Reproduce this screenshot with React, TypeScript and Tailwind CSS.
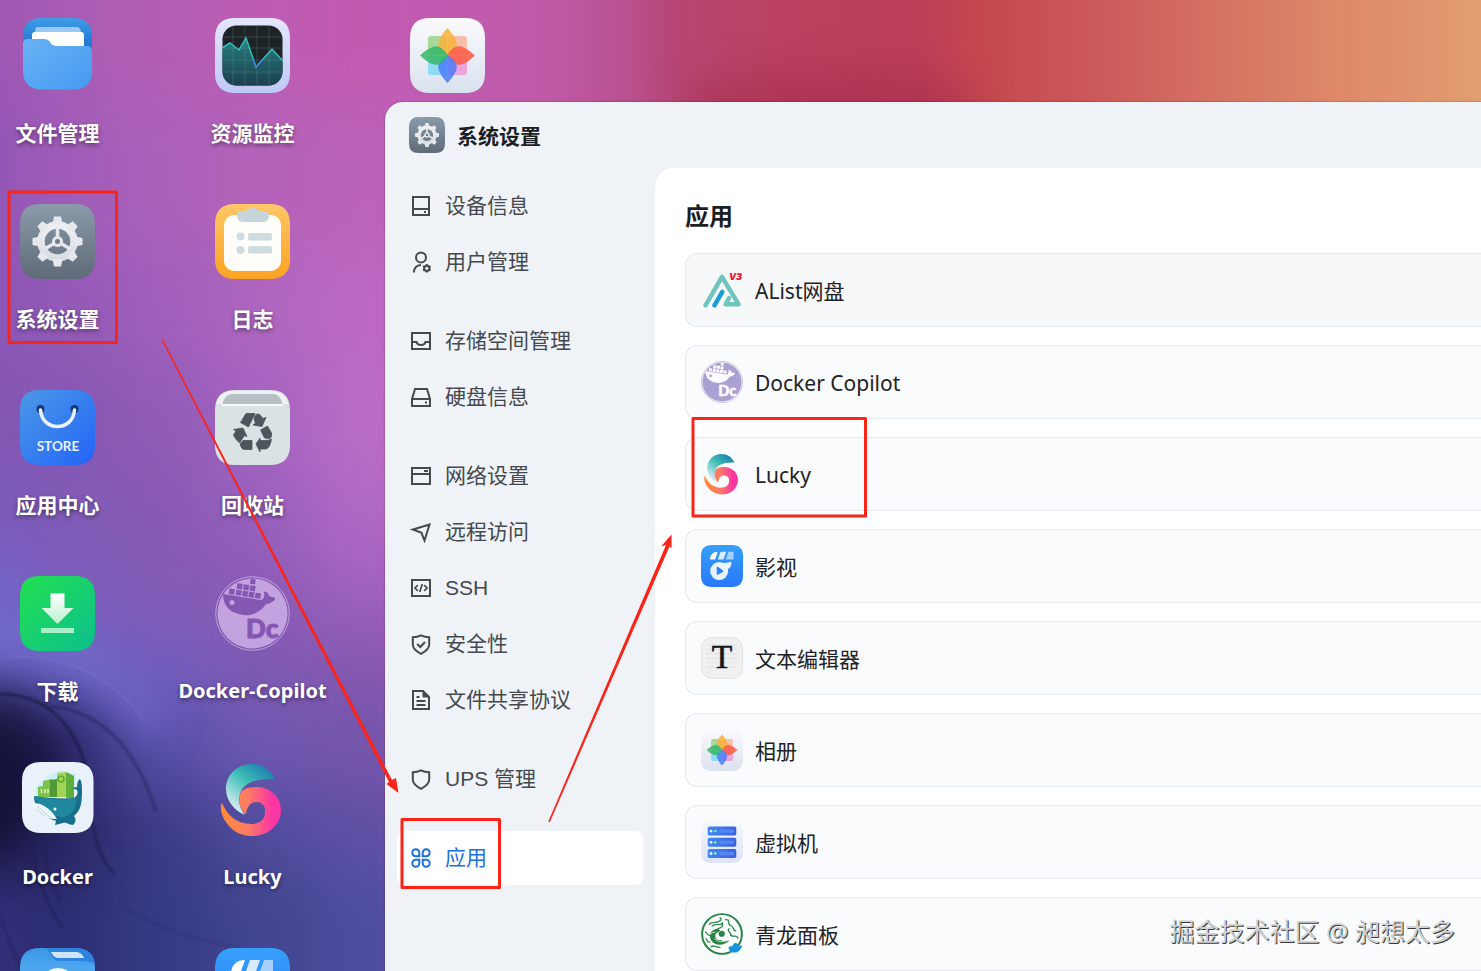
import type { ReactNode } from 'react'

/* ---------- wallpaper ---------- */

// coarse colour mesh, blurred into a smooth wallpaper
const meshX = [-60, 60, 150, 250, 350]
const meshRows = [
  { y: -100, h: 200, colors: ['#9a55b3', '#a85cb4', '#b35eb5', '#be5cb4', '#c35ab0'] },
  { y: 100, h: 150, colors: ['#9055b6', '#9e5cb8', '#ab61ba', '#b362b9', '#bc62ba'] },
  { y: 250, h: 120, colors: ['#8a56b8', '#9259b7', '#9f5fba', '#ae66bf', '#bb69c3'] },
  { y: 370, h: 110, colors: ['#8156b4', '#8558b2', '#905bb7', '#a463c0', '#b96cc5'] },
  { y: 480, h: 90, colors: ['#775cbd', '#7f5bb7', '#865ab5', '#965fbc', '#ae68c3'] },
  { y: 570, h: 70, colors: ['#7069d2', '#7a60c0', '#815cb7', '#875ab5', '#9a60bb'] },
  { y: 640, h: 60, colors: ['#5a58b4', '#6663c2', '#735fc0', '#7e5ab2', '#8457b0'] },
  { y: 700, h: 90, colors: ['#16133a', '#2e2a70', '#5650a8', '#6e58b0', '#7555ac'] },
  { y: 790, h: 80, colors: ['#191641', '#282560', '#3b3a86', '#504c9e', '#5f50a4'] },
  { y: 870, h: 200, colors: ['#33307a', '#2c2d72', '#363b85', '#42458f', '#4d4d9f'] },
]

function Wallpaper() {
  return (
    <svg
      className="absolute inset-0 h-full w-full"
      viewBox="0 0 1481 971"
      preserveAspectRatio="xMinYMin slice"
      colorInterpolationFilters="sRGB"
      aria-hidden="true"
    >
      <defs>
        <linearGradient id="wpTop" x1="0" x2="1481" y1="0" y2="0" gradientUnits="userSpaceOnUse">
          <stop offset="0.26" stopColor="#c05cb6" />
          <stop offset="0.365" stopColor="#c05aa8" />
          <stop offset="0.415" stopColor="#ba5296" />
          <stop offset="0.46" stopColor="#b54571" />
          <stop offset="0.52" stopColor="#ba4161" />
          <stop offset="0.62" stopColor="#bb3e58" />
          <stop offset="0.66" stopColor="#c4474f" />
          <stop offset="0.74" stopColor="#cb595b" />
          <stop offset="0.83" stopColor="#d67564" />
          <stop offset="0.91" stopColor="#de8a68" />
          <stop offset="1" stopColor="#e29d72" />
        </linearGradient>
        <linearGradient id="wpFade" x1="0" x2="1" y1="0" y2="0">
          <stop offset="0" stopColor="#fff" />
          <stop offset="0.8" stopColor="#fff" />
          <stop offset="1" stopColor="#000" />
        </linearGradient>
        <mask id="wpMask">
          <rect width="470" height="971" fill="url(#wpFade)" />
        </mask>
        <filter id="wpBlur" x="-20%" y="-20%" width="140%" height="140%">
          <feGaussianBlur stdDeviation="32" />
        </filter>
        <filter id="wpSoft" x="-60%" y="-80%" width="220%" height="260%">
          <feGaussianBlur stdDeviation="18" />
        </filter>
        <filter id="wpLine">
          <feGaussianBlur stdDeviation="1" />
        </filter>
      </defs>
      <rect width="1481" height="971" fill="url(#wpTop)" />
      <ellipse cx="830" cy="105" rx="150" ry="35" fill="#a32c4c" fillOpacity="0.5" filter="url(#wpSoft)" />
      <g mask="url(#wpMask)">
        <g filter="url(#wpBlur)">
          {meshRows.map((row) =>
            row.colors.map((color, i) => (
              <rect key={`${row.y}-${i}`} x={meshX[i] - 40} y={row.y} width={i === 4 ? 260 : 160} height={row.h + 2} fill={color} />
            ))
          )}
        </g>
        <path d="M-40 640C40 628 110 662 160 730" stroke="#7f78dc" strokeWidth="26" strokeOpacity="0.6" fill="none" filter="url(#wpSoft)" />
        <path d="M-30 700C20 680 60 720 70 765C60 800 20 850 -30 870Z" fill="#0b0928" fillOpacity="0.5" filter="url(#wpSoft)" />
        <g fill="none" filter="url(#wpLine)">
          <path d="M0 658C50 650 110 670 145 722" stroke="#8c86e6" strokeOpacity="0.25" strokeWidth="2" />
          <path d="M0 694C50 694 76 730 86 768" stroke="#07051c" strokeOpacity="0.4" strokeWidth="3" />
          <path d="M50 706C110 712 140 760 156 812" stroke="#141038" strokeOpacity="0.35" strokeWidth="3" />
          <path d="M92 820C96 845 102 860 114 874" stroke="#100d30" strokeOpacity="0.5" strokeWidth="2" />
          <path d="M33 850C36 880 48 905 62 928" stroke="#15123c" strokeOpacity="0.4" strokeWidth="2" />
          <path d="M45 850C48 880 54 890 60 900" stroke="#15123c" strokeOpacity="0.3" strokeWidth="2" />
          <path d="M0 915C8 940 15 955 22 971" stroke="#15123c" strokeOpacity="0.3" strokeWidth="2" />
          <path d="M120 905C160 930 200 942 240 948" stroke="#252860" strokeOpacity="0.2" strokeWidth="3" />
        </g>
      </g>
    </svg>
  )
}

/* ---------- app icons, all on a 75x75 box ---------- */

const squircle = 'M20 0H55Q75 0 75 20V55Q75 75 55 75H20Q0 75 0 55V20Q0 0 20 0Z'

function Glyph({ children, className = 'size-[75px]' }: { children: ReactNode; className?: string }) {
  return (
    <svg className={`${className} shrink-0`} viewBox="0 0 75 75" aria-hidden="true">
      {children}
    </svg>
  )
}

function FolderIcon() {
  return (
    <Glyph>
      <defs>
        <linearGradient id="fBack" x1="0" x2="0" y1="0" y2="1">
          <stop offset="0" stopColor="#3f9de8" />
          <stop offset="0.5" stopColor="#2478d0" />
        </linearGradient>
        <linearGradient id="fFront" x1="0" x2="1" y1="0" y2="1">
          <stop offset="0" stopColor="#68b2f4" />
          <stop offset="1" stopColor="#459bf2" />
        </linearGradient>
      </defs>
      <path d="M22 0H53Q72 0 72 19V52H3V19Q3 0 22 0Z" fill="url(#fBack)" />
      <path d="M18 9H57Q60 9 61 14H15Q15 9 18 9Z" fill="#9cc9f3" />
      <rect x="12" y="14" width="52" height="24" rx="3" fill="#fff" />
      <path d="M3 25Q3 21 8 21H24Q28 21 30 24Q32 28 37 28H66Q72 28 72 33V52Q72 71.5 53 71.5H22Q3 71.5 3 52Z" fill="url(#fFront)" />
    </Glyph>
  )
}

function MonitorIcon() {
  return (
    <Glyph>
      <defs>
        <linearGradient id="mFrame" x1="0" x2="0" y1="0" y2="1">
          <stop offset="0" stopColor="#e4e6fb" />
          <stop offset="1" stopColor="#bfc8f5" />
        </linearGradient>
        <linearGradient id="mArea" x1="0" x2="0" y1="0" y2="1">
          <stop offset="0" stopColor="#257f7e" />
          <stop offset="1" stopColor="#1c3f50" />
        </linearGradient>
        <clipPath id="mClip">
          <rect x="7.5" y="7.5" width="60" height="60" rx="14" />
        </clipPath>
      </defs>
      <path d={squircle} fill="url(#mFrame)" />
      <g clipPath="url(#mClip)">
        <rect x="7" y="7" width="61" height="61" fill="#1e2426" />
        <path d="M7 30L15 25L24 32L31 20L41 49L57 31L68 43V68H7Z" fill="url(#mArea)" />
        <path d="M18 7V68M30 7V68M42 7V68M54 7V68M7 19H68M7 30H68M7 42H68M7 54H68" stroke="#8aa39a" strokeOpacity="0.25" />
        <path d="M7 30L15 25L24 32L31 20L41 49L57 31L68 43" fill="none" stroke="#2fc0bd" strokeWidth="1.5" />
        <path d="M38 41L41 49L48 41" fill="none" stroke="#3a80e8" strokeWidth="1.5" />
      </g>
    </Glyph>
  )
}

const teeth = [0, 45, 90, 135, 180, 225, 270, 315]

function SettingsIcon({ className }: { className?: string }) {
  return (
    <Glyph className={className}>
      <defs>
        <linearGradient id="sBg" x1="0" x2="0" y1="0" y2="1">
          <stop offset="0" stopColor="#8b9baa" />
          <stop offset="1" stopColor="#5f6a78" />
        </linearGradient>
        <linearGradient id="sGear" x1="0" x2="0" y1="12" y2="63" gradientUnits="userSpaceOnUse">
          <stop offset="0" stopColor="#f4f5f8" />
          <stop offset="1" stopColor="#d3d7de" />
        </linearGradient>
      </defs>
      <path d={squircle} fill="url(#sBg)" />
      <circle cx="37.5" cy="37.5" r="16.5" fill="none" stroke="url(#sGear)" strokeWidth="7.5" />
      {teeth.map((angle) => (
        <path key={angle} d="M34 12.5H41L42.5 20H32.5Z" fill="#e6e8ed" transform={`rotate(${angle} 37.5 37.5)`} />
      ))}
      {[0, 120, 240].map((angle) => (
        <path key={angle} d="M37.5 34V23" stroke="#e6e8ed" strokeWidth="3.5" transform={`rotate(${angle} 37.5 37.5)`} />
      ))}
      <circle cx="37.5" cy="37.5" r="4" fill="#6f7b89" stroke="#e6e8ed" strokeWidth="3" />
    </Glyph>
  )
}

function LogIcon() {
  return (
    <Glyph>
      <defs>
        <linearGradient id="lBg" x1="0" x2="0" y1="0" y2="1">
          <stop offset="0" stopColor="#fdc767" />
          <stop offset="1" stopColor="#fba321" />
        </linearGradient>
      </defs>
      <path d={squircle} fill="url(#lBg)" />
      <rect x="9" y="11" width="57" height="56" rx="10" fill="#fffdf9" />
      <path d="M27 7H31Q33 4 38 4T45 7H49Q54 7 54 11Q54 18 48 18H28Q22 18 22 11Q22 7 27 7Z" fill="#c6d5dc" />
      <circle cx="25.5" cy="32.5" r="4" fill="#cfdce2" />
      <circle cx="25.5" cy="46" r="4" fill="#cfdce2" />
      <rect x="33" y="29" width="24" height="7.5" rx="2" fill="#cfdce2" />
      <rect x="33" y="42" width="24" height="7.5" rx="2" fill="#cfdce2" />
    </Glyph>
  )
}

function StoreIcon() {
  return (
    <Glyph>
      <defs>
        <linearGradient id="stBg" x1="0" x2="1" y1="0" y2="1">
          <stop offset="0" stopColor="#4b9ae8" />
          <stop offset="1" stopColor="#2363f6" />
        </linearGradient>
      </defs>
      <path d={squircle} fill="url(#stBg)" />
      <circle cx="20.5" cy="19" r="4" fill="#173a78" />
      <circle cx="54.5" cy="19" r="4" fill="#173a78" />
      <path d="M20.5 20C22 42 53 42 54.5 20" fill="none" stroke="#eaf4ff" strokeWidth="3.5" strokeLinecap="round" />
      <text x="38" y="61" textAnchor="middle" fontFamily="Lato, sans-serif" fontWeight="700" fontSize="13.5" fill="#e8f2ff">
        STORE
      </text>
    </Glyph>
  )
}

function TrashIcon() {
  return (
    <Glyph>
      <path d={squircle} fill="#d9e3e4" />
      <path d="M20 1H55Q70 1 73.5 14H1.5Q5 1 20 1Z" fill="#eef2f4" />
      <path d="M17 4H58Q65 4 67.5 14H7.5Q10 4 17 4Z" fill="#b7bfc2" />
      <path d="M7 15H68" stroke="#f6f9fa" strokeWidth="2" />
      <g fill="#4c565b" stroke="#4c565b" strokeWidth="0.8" strokeLinejoin="round">
        <path d="M31 23.5H40L33.500 37L25.500 32.500Z" />
        <path d="M41 24.500Q45 22.500 47.500 28.500L51 27.500L47 36.500L38 35L40.500 33Q37.500 28 41 24.500Z" />
        <path d="M45.500 40L52.500 36L56.500 43Q57.500 46 55 48.500L49.500 48Z" />
        <path d="M41 54L45 48V50.500H50Q54 50.500 56.500 49Q55 58 51 59H45V62Z" />
        <path d="M25 54L28 50.500H37V59.500H28.500Q26.500 59 25 54Z" />
        <path d="M18.500 39.500L28 38L32 46.500L29.500 45.500L24.500 53Q20 49 18.500 45L21 41Z" />
      </g>
    </Glyph>
  )
}

function DownloadIcon() {
  return (
    <Glyph>
      <defs>
        <linearGradient id="dBg" x1="0" x2="1" y1="0" y2="1">
          <stop offset="0" stopColor="#22e04f" />
          <stop offset="1" stopColor="#0cbf8e" />
        </linearGradient>
        <linearGradient id="dArrow" x1="0" x2="0" y1="0" y2="1">
          <stop offset="0" stopColor="#fff" />
          <stop offset="1" stopColor="#b9f2cf" />
        </linearGradient>
      </defs>
      <path d={squircle} fill="url(#dBg)" />
      <path d="M30.5 17.5H44.5V32H53.5L37.5 48L21.5 32H30.5Z" fill="url(#dArrow)" />
      <rect x="21" y="52" width="33" height="5" fill="#a9efc9" />
    </Glyph>
  )
}

function CopilotIcon({ disc, ink, className }: { disc: string; ink: string; className?: string }) {
  return (
    <Glyph className={className}>
      <circle cx="37.5" cy="37.5" r="35" fill={disc} />
      <circle cx="37.5" cy="37.5" r="36.8" fill="none" stroke={disc} />
      <g fill={ink}>
        <g transform="rotate(9 30 20)">
          <path d="M33 2H38V7H33Z" />
          <path d="M20.5 8.5H26V14H20.5ZM27 8.5H32.5V14H27ZM33.500 8.5H39V14H33.500Z" />
          <path d="M13.500 15H19V20.500H13.500ZM20.500 15H26V20.500H20.500ZM27 15H32.500V20.500H27ZM33.500 15H39V20.500H33.500ZM40 15H45.500V20.500H40Z" />
        </g>
        <path d="M8 18L45 24C48 24 50 22 49 16C50 14 54 18 55 21C58 20 61 22 60 24C57 26 54 28 51 28C46 36 37 40 28 39C15 37 8 30 8 18Z" />
        <text x="31" y="62" fontFamily="Lato, sans-serif" fontWeight="900" fontSize="26" stroke={ink} strokeWidth="1">
          Dc
        </text>
      </g>
      <circle cx="17" cy="26.500" r="2.500" fill={disc} />
    </Glyph>
  )
}

function DockerIcon() {
  return (
    <Glyph>
      <path d="M21 0H54Q73.500 0 73.500 19V52Q73.500 71 54 71H21Q2 71 2 52V19Q2 0 21 0Z" fill="#e9f2fa" />
      <path d="M16 25L30 12L40 8L56 12L54 35H16Z" fill="#c9f0f5" />
      <path d="M23 19L32 17V35H18V25L23 24Z" fill="#7fc04a" />
      <path d="M30 18L37 17V35H30Z" fill="#4f9a32" />
      <path d="M37 11L46 10V35H37Z" fill="#9fd455" />
      <path d="M46 10L54 14V36H46Z" fill="#5fae39" />
      <circle cx="41" cy="17" r="3" fill="none" stroke="#4f9a32" strokeWidth="1.200" />
      <path d="M21 27L22 31M25 27V31M28 27V31" stroke="#effad8" strokeWidth="1.300" />
      <path d="M14 34C28 36 42 37 54 36C58 33 58 31 57 28L52 26L57 25C57 21 58 18 60 17C62 20 62 25 62 30C62 43 60 49 54 54C57 58 55 61 53 63C48 63 47 60 43 61L35 63L36 59C23 55 14 46 14 34Z" fill="#176f8c" />
      <path d="M14 34C30 37 44 39 56 36C57 45 52 53 42 56C30 52 20 46 14 34Z" fill="#2087a0" />
      <path d="M14 41C22 41 31 47 37 57C27 58 16 52 14 41Z" fill="#eef6fc" />
      <path d="M17 44L31 56M16 47L26 55" stroke="#a9c7da" strokeWidth="0.800" />
      <circle cx="35" cy="47" r="1.500" fill="#fff" />
    </Glyph>
  )
}

function LuckyIcon({ className }: { className?: string }) {
  return (
    <Glyph className={className}>
      <defs>
        <linearGradient id="lkTop" x1="60" x2="26" y1="8" y2="50" gradientUnits="userSpaceOnUse">
          <stop offset="0" stopColor="#1777ae" />
          <stop offset="0.5" stopColor="#3fbfb6" />
          <stop offset="1" stopColor="#cfeaf0" />
        </linearGradient>
        <linearGradient id="lkBot" x1="6" x2="66" y1="0" y2="0" gradientUnits="userSpaceOnUse">
          <stop offset="0" stopColor="#ff8a35" />
          <stop offset="0.45" stopColor="#ff7c66" />
          <stop offset="0.85" stopColor="#fb36a4" />
        </linearGradient>
      </defs>
      <path d="M60 17C54 7 47 2 37 2C22 2 11 13 11 27C11 39 20 49 30 53C25 47 23 40 25 32C28 21 42 16 60 17Z" fill="url(#lkTop)" />
      <path d="M7 41C4 44 7 55 11 60C17 69 26 74 37 74C54 74 66 62 66 48C66 35 55 25 42 25C33 25 26 27 25 33C23 41 26 49 31 52C32 44 36 40 41 40C47 40 51 44 50 50C50 58 44 62 36 62C22 62 12 53 7 41Z" fill="url(#lkBot)" />
    </Glyph>
  )
}

const petals = [
  { angle: 0, color: '#fbb03b' },
  { angle: 90, color: '#fb5a42' },
  { angle: 180, color: '#4a7df7' },
  { angle: 270, color: '#35b767' },
]

function PhotosIcon({ className }: { className?: string }) {
  return (
    <Glyph className={className}>
      <defs>
        <linearGradient id="pBg" x1="0" x2="0" y1="0" y2="1">
          <stop offset="0" stopColor="#fafafd" />
          <stop offset="1" stopColor="#dae2ef" />
        </linearGradient>
      </defs>
      <path d={squircle} fill="url(#pBg)" />
      <rect x="18" y="18" width="19" height="19" rx="3" fill="#8fd07a" fillOpacity="0.75" />
      <rect x="38" y="18" width="19" height="19" rx="3" fill="#fba98c" fillOpacity="0.7" />
      <rect x="18" y="38" width="19" height="19" rx="3" fill="#6fd3f2" fillOpacity="0.7" />
      <rect x="38" y="38" width="19" height="19" rx="3" fill="#f07fd0" fillOpacity="0.65" />
      {petals.map((p) => (
        <path
          key={p.angle}
          d="M37.500 38C31 34 27 29 28.500 24Q30 18 37.500 10Q45 18 46.500 24C48 29 44 34 37.500 38Z"
          fill={p.color}
          fillOpacity="0.85"
          transform={`rotate(${p.angle} 37.5 37.5)`}
        />
      ))}
    </Glyph>
  )
}

function VideoIcon({ className }: { className?: string }) {
  return (
    <Glyph className={className}>
      <defs>
        <linearGradient id="vBg" x1="0" x2="0" y1="0" y2="1">
          <stop offset="0" stopColor="#35a0fb" />
          <stop offset="1" stopColor="#2a78fa" />
        </linearGradient>
      </defs>
      <path d={squircle} fill="url(#vBg)" />
      <path d="M30 12L25 26H16C16 18 21 12 30 12Z" fill="#fff" />
      <path d="M35 12H45L40 26H30Z" fill="#d9ecff" />
      <path d="M49 12H58V26H44Z" fill="#a5d0fd" />
      <path d="M22 35C30 32 44 33 54 30C55 37 52 42 46 44L36 46Z" fill="#eaf4ff" />
      <circle cx="32.500" cy="46.500" r="16" fill="#eaf4ff" />
      <path d="M28 40Q28 38 30 39L39 45Q40 46.500 39 48L30 53Q28 54 28 52Z" fill="#2c84fa" />
    </Glyph>
  )
}

function BrowserFolderIcon() {
  return (
    <Glyph>
      <defs>
        <linearGradient id="bBg" x1="0" x2="0" y1="0" y2="1">
          <stop offset="0" stopColor="#3b97e6" />
          <stop offset="0.4" stopColor="#55adf2" />
        </linearGradient>
      </defs>
      <path d={squircle} fill="url(#bBg)" />
      <path d="M25 0H55Q75 0 75 20V16Q70 13 60 13H40Q34 13 31 7Q29 2 25 0Z" fill="#2d84dc" />
      <path d="M31 4H57Q62 5 64 10H37Q33 9 31 4Z" fill="#cfe4f8" />
      <circle cx="38" cy="38" r="15" fill="none" stroke="#f3f9ff" strokeWidth="6" />
    </Glyph>
  )
}

function AListIcon({ className }: { className?: string }) {
  return (
    <Glyph className={className}>
      <g fill="none" strokeWidth="8" strokeLinecap="round" strokeLinejoin="round">
        <path d="M8 65L37.500 14L67 63H44L50 52" stroke="#70c6be" />
        <path d="M24 65L38 41" stroke="#1b9fdc" />
      </g>
      <text x="50" y="19" fontFamily="Inter, sans-serif" fontWeight="900" fontStyle="italic" fontSize="16" fill="#f0142f">
        V3
      </text>
    </Glyph>
  )
}

function EditorIcon({ className }: { className?: string }) {
  return (
    <Glyph className={className}>
      <rect x="1" y="1" width="73" height="73" rx="18" fill="#f0f0f0" stroke="#dedede" strokeWidth="1.500" />
      <path d="M10 14H65M10 22H65M10 30H65M10 38H65M10 46H65M10 54H65" stroke="#dadada" strokeWidth="1.200" />
      <text x="37.500" y="56" textAnchor="middle" fontFamily="Liberation Serif, serif" fontSize="60" fill="#161616" stroke="#161616" strokeWidth="1">
        T
      </text>
    </Glyph>
  )
}

function VmIcon({ className }: { className?: string }) {
  return (
    <Glyph className={className}>
      <defs>
        <linearGradient id="vmBar" x1="0" x2="1" y1="0" y2="0">
          <stop offset="0" stopColor="#3f8bf2" />
          <stop offset="1" stopColor="#3b5fe0" />
        </linearGradient>
        <linearGradient id="vmBg" x1="0" x2="0" y1="0" y2="1">
          <stop offset="0" stopColor="#f6f8fe" />
          <stop offset="1" stopColor="#dde3f6" />
        </linearGradient>
      </defs>
      <path d={squircle} fill="url(#vmBg)" />
      {[10, 30, 50].map((y) => (
        <g key={y}>
          <rect x="12" y={y} width="51" height="16" rx="3" fill="url(#vmBar)" />
          <rect x="32" y={y + 5} width="27" height="6" rx="2" fill="#5585f0" />
          <circle cx="18" cy={y + 8} r="2.500" fill="#e8f4ff" />
          <circle cx="25.500" cy={y + 8} r="2.500" fill="#7fe6b5" />
        </g>
      ))}
    </Glyph>
  )
}

function QinglongIcon({ className }: { className?: string }) {
  return (
    <Glyph className={className}>
      <circle cx="37.500" cy="37.500" r="35.500" fill="#fcfdfd" stroke="#268345" strokeWidth="3.500" />
      <g fill="none" stroke="#2f8a4d" strokeLinecap="round" strokeWidth="2.400">
        <path d="M15 20C22 13 28 20 34 14C37 11 36 9 34 9M20 23C27 18 34 24 38 18C41 24 34 27 30 28" />
        <path d="M44 12C52 10 47 19 52 22C60 24 55 30 62 32M50 28C45 33 56 34 53 40C60 44 64 38 66 45" />
        <path d="M8 34C12 36 10 40 16 40M9 46C12 48 10 53 16 52M18 60C24 56 28 63 34 61" />
      </g>
      <path d="M30 28C18 28 12 40 19 50C27 60 42 58 52 48C47 51 40 51 35 48C28 50 24 44 26 39C27 35 33 34 34 31Z" fill="#268345" />
      <path d="M24 46Q34 56 50 47M17 38Q20 34 26 34" fill="none" stroke="#dff0e3" strokeWidth="1.500" />
      <circle cx="37" cy="37" r="5.500" fill="#268345" />
      <path d="M49 61C50 70 58 72 64 70C70 68 71 63 74 59C71 57 69 59 68 60C67 55 63 52 59 54L57 58Z" fill="#1b93e0" />
    </Glyph>
  )
}

/* ---------- sidebar line icons, 22x22 ---------- */

function LineIcon({ children }: { children: ReactNode }) {
  return (
    <svg className="size-[22px] shrink-0" viewBox="0 0 22 22" fill="none" stroke="currentColor" strokeWidth="2" aria-hidden="true">
      {children}
    </svg>
  )
}

const shield = 'M11 2.300C14 3.800 17 4.200 19.200 4.200V11.500C19.200 16 15.500 18.500 11 20.800C6.500 18.500 2.800 16 2.800 11.500V4.200C5 4.200 8 3.800 11 2.300Z'

const menuGroups = [
  [
    {
      label: '设备信息',
      icon: <><path d="M3 2H19V20H3ZM3 14H19" /><path d="M14 17H16" /></>,
    },
    {
      label: '用户管理',
      icon: (
        <>
          <circle cx="11" cy="6.500" r="5" />
          <path d="M3.800 21.500C4 17 6.500 14.200 11 13.900" />
          <path d="M16.800 13V14.500M16.800 20V21.600M13 15.200L14.300 15.900M19.300 18.600L20.600 19.400M13 19.400L14.300 18.600M19.300 15.900L20.600 15.200" />
          <circle cx="16.800" cy="17.300" r="2.600" />
        </>
      ),
    },
  ],
  [
    {
      label: '存储空间管理',
      icon: <path d="M2 3H20V19H2ZM2 12H6.500C7 14 8.500 15 11 15S15 14 15.500 12H20" />,
    },
    {
      label: '硬盘信息',
      icon: <><path d="M5 3H17L20 13V20H2V13ZM2 13H20" /><path d="M15 16.500H17" /></>,
    },
  ],
  [
    {
      label: '网络设置',
      icon: <><path d="M2 3H20V19H2ZM2 9H20" /><path d="M14 6H18" /></>,
    },
    { label: '远程访问', icon: <path d="M3 8.500L19.500 3.500L14.500 19.500L11.500 11.800Z" /> },
    {
      label: 'SSH',
      icon: <><path d="M2 3H20V19H2Z" /><path d="M7.800 8.200L5 11L7.800 13.800M14.200 8.200L17 11L14.200 13.800M12.300 7L9.700 15" strokeWidth="1.700" /></>,
    },
    { label: '安全性', icon: <><path d={shield} /><path d="M7.200 11L10.300 14L15 9" /></> },
    {
      label: '文件共享协议',
      icon: <><path d="M3 2H13L19 8V20H3Z" /><path d="M13 2V8H19Z" fill="currentColor" strokeWidth="1" /><path d="M6.500 8H9.500M6.500 12H15.500M6.500 16H15.500" /></>,
    },
  ],
  [{ label: 'UPS 管理', icon: <path d={shield} /> }],
  [
    {
      label: '应用',
      icon: (
        <path d="M9.300 9.300H5.800A3.500 3.500 0 1 1 9.300 5.800ZM12.700 9.300V5.800A3.500 3.500 0 1 1 16.200 9.300ZM9.300 12.700V16.200A3.500 3.500 0 1 1 5.800 12.700ZM12.700 12.700H16.200A3.500 3.500 0 1 1 12.700 16.200Z" />
      ),
    },
  ],
]

const desktopColumns = [
  [
    { label: '文件管理', icon: <FolderIcon /> },
    { label: '系统设置', icon: <SettingsIcon /> },
    { label: '应用中心', icon: <StoreIcon /> },
    { label: '下载', icon: <DownloadIcon /> },
    { label: 'Docker', latin: true, icon: <DockerIcon /> },
    { icon: <BrowserFolderIcon /> },
  ],
  [
    { label: '资源监控', icon: <MonitorIcon /> },
    { label: '日志', icon: <LogIcon /> },
    { label: '回收站', icon: <TrashIcon /> },
    { label: 'Docker-Copilot', latin: true, icon: <CopilotIcon disc="#c3a2df" ink="#8458b2" /> },
    { label: 'Lucky', latin: true, icon: <LuckyIcon /> },
    { icon: <VideoIcon /> },
  ],
  [{ icon: <PhotosIcon /> }],
]

const small = 'size-[42px]'

const apps = [
  { name: 'AList网盘', icon: <AListIcon className={small} /> },
  { name: 'Docker Copilot', icon: <CopilotIcon disc="#aba0d2" ink="#fbfaff" className={small} /> },
  { name: 'Lucky', icon: <LuckyIcon className={small} /> },
  { name: '影视', icon: <VideoIcon className={small} /> },
  { name: '文本编辑器', icon: <EditorIcon className={small} /> },
  { name: '相册', icon: <PhotosIcon className={small} /> },
  { name: '虚拟机', icon: <VmIcon className={small} /> },
  { name: '青龙面板', icon: <QinglongIcon className={small} /> },
]

function DesktopLabel({ text, latin }: { text: string; latin?: boolean }) {
  return (
    <span
      className={`${latin ? 'text-xl' : 'text-[21px]'} leading-6 font-bold whitespace-nowrap text-white [text-shadow:0_2px_4px_rgba(0,0,0,0.45)]`}
    >
      {text}
    </span>
  )
}

function Desktop() {
  return (
    <div className="relative flex gap-20 pt-[18px]">
      {desktopColumns.map((column, i) => (
        <div key={i} className="flex w-[115px] flex-col gap-[58px]">
          {column.map((item, j) => (
            <button key={j} type="button" className="flex h-32 shrink-0 flex-col items-center gap-7">
              {item.icon}
              {item.label && <DesktopLabel text={item.label} latin={item.latin} />}
            </button>
          ))}
        </div>
      ))}
    </div>
  )
}

function Sidebar() {
  return (
    <nav className="flex w-[270px] shrink-0 flex-col gap-[25px] px-3 pt-[11px] font-['Liberation_Sans','Noto_Sans_CJK_SC',sans-serif]">
      {menuGroups.map((group, i) => (
        <ul key={i} className="flex flex-col gap-0.5">
          {group.map((item) => (
            <li key={item.label}>
              <button
                type="button"
                className={
                  item.label === '应用'
                    ? 'flex h-[54px] w-full items-center gap-[13px] rounded-lg bg-white pl-[13px] text-[#1d6fdc]'
                    : 'flex h-[54px] w-full items-center gap-[13px] rounded-lg pl-[13px] text-[#45494e]'
                }
              >
                <LineIcon>{item.icon}</LineIcon>
                <span className="text-[21px] leading-7">{item.label}</span>
              </button>
            </li>
          ))}
        </ul>
      ))}
    </nav>
  )
}

function SettingsWindow() {
  return (
    <div className="absolute top-[102px] right-0 bottom-0 left-[385px] flex flex-col overflow-hidden rounded-tl-[18px] bg-[#eff3f8] shadow-[0_0_2px_rgba(0,0,0,0.4)]">
      <header className="flex h-[66px] shrink-0 items-center gap-3 pl-6">
        <SettingsIcon className="size-9" />
        <h1 className="pt-0.5 text-[21px] leading-7 font-bold text-[#1b1e22]">系统设置</h1>
      </header>
      <div className="flex min-h-0 grow">
        <Sidebar />
        <main className="grow overflow-hidden rounded-tl-[18px] bg-white pt-8 pl-[30px]">
          <h2 className="text-2xl leading-8 font-bold text-[#1b1e22]">应用</h2>
          <ul className="mt-[21px] flex flex-col gap-[18px]">
            {apps.map((app, i) => (
              <li key={app.name}>
                <button
                  type="button"
                  className={
                    i === 0
                      ? 'flex h-[74px] w-full items-center gap-3 rounded-l-xl border border-r-0 border-[#e6eaee] bg-[#f6f8fa] pl-[15px]'
                      : 'flex h-[74px] w-full items-center gap-3 rounded-l-xl border border-r-0 border-[#e6eaee] bg-[#fafbfd] pl-[15px]'
                  }
                >
                  {app.icon}
                  <span className="pt-0.5 text-[21px] leading-7 text-[#1f2226]">{app.name}</span>
                </button>
              </li>
            ))}
          </ul>
        </main>
      </div>
    </div>
  )
}

// hand-drawn guide marks: three frames and two tapered arrows
function Annotations() {
  return (
    <svg className="pointer-events-none absolute top-0 left-0" width="1481" height="971" aria-hidden="true">
      <g fill="none" stroke="#fa2419" strokeWidth="3" strokeLinejoin="round">
        <rect x="9" y="192" width="107.500" height="150.500" />
        <rect x="402" y="819.500" width="97.500" height="68" />
        <rect x="693" y="418.500" width="172.500" height="97.500" />
      </g>
      <g fill="#fa2419">
        <path d="M161.500 340L163 340L392 780L396 778L398.500 793L386.500 784L389 782Z" />
        <path d="M548.300 821.500L549.800 822.200L669.500 546.500L671.500 548L671.500 534.500L661 546.500L666 545Z" />
      </g>
    </svg>
  )
}

export default function App() {
  return (
    <div className="relative h-screen overflow-hidden bg-[#9a5ab5] font-['Noto_Sans','Noto_Sans_CJK_SC',sans-serif]">
      <Wallpaper />
      <Desktop />
      <SettingsWindow />
      <Annotations />
      <p className="absolute right-[26px] bottom-[22px] text-[25px] leading-9 text-[#d0d2d4] [text-shadow:1px_1px_0_#3a3a3a]">
        掘金技术社区 @ 昶想太多
      </p>
    </div>
  )
}
